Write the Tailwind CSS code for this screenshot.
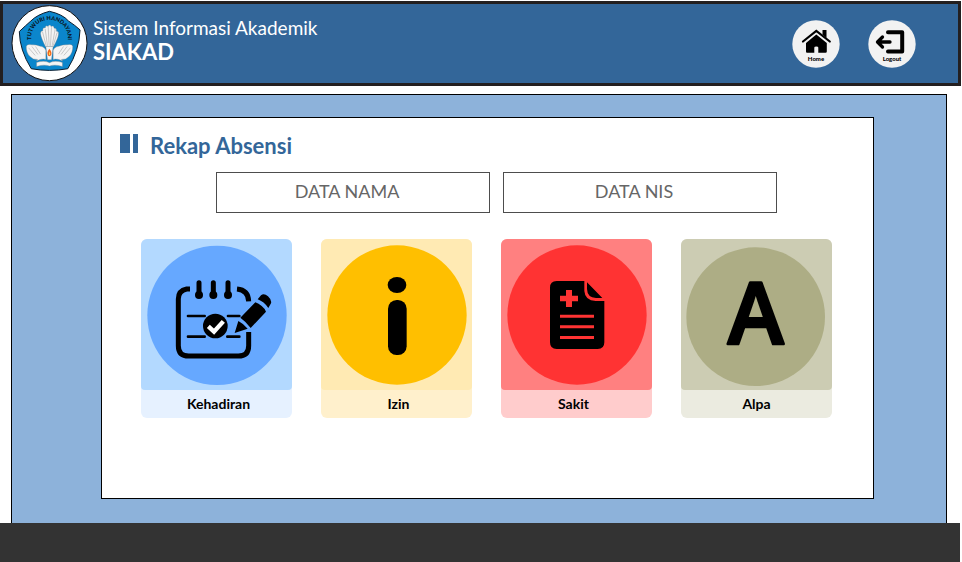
<!DOCTYPE html>
<html lang="id">
<head>
<meta charset="utf-8">
<meta name="viewport" content="width=device-width, initial-scale=1">
<title>SIAKAD - Rekap Absensi</title>
<script src="https://cdn.jsdelivr.net/npm/@tailwindcss/browser@4"></script>
</head>
<body class="flex min-h-screen flex-col bg-white font-['Lato','Open_Sans',sans-serif] text-black">

<header class="mt-px mr-px flex items-center border-[3px] border-[#231f20] bg-[#336699] pt-px pr-[42px] pb-px pl-2">
  <svg class="size-[77px] shrink-0" viewBox="32 14 232 232" role="img" aria-label="Logo Tut Wuri Handayani">
    <circle cx="148" cy="129" r="113" fill="#fff" stroke="#111" stroke-width="3"/>
    <path d="M148 33Q188 42 205 62Q226 76 240 89Q238 150 203 206Q148 216 93 206Q58 150 57 94Q76 76 92 62Q112 42 148 33Z" fill="#0b86cc" stroke="#0a1a2a" stroke-width="3"/>
    <path id="arc" d="M93 122C86 38 210 38 203 122" fill="none"/>
    <text font-family="Lato" font-size="17" font-weight="900" fill="#071522"><textPath href="#arc" startOffset="50%" text-anchor="middle">TUTWURI HANDAYANI</textPath></text>
    <g fill="#f4f4f4" stroke="#777" stroke-width="1">
      <path d="M136 140Q122 112 121 100Q121 91 128 92Q127 80 135 83Q137 72 144 79Q148 70 153 79Q161 74 162 84Q170 82 169 93Q177 93 175 103Q174 114 160 140Z"/>
      <path d="M137 150Q132 139 120 138Q105 133 95 134Q81 130 78 138Q77 158 90 170Q98 179 112 178L108 183Q126 174 137 178Z"/>
      <path d="M159 150Q164 139 176 138Q191 133 201 134Q216 130 218 138Q219 158 206 170Q198 179 184 178L188 183Q170 174 159 178Z"/>
      <path d="M137 139H159L154 179H142Z"/>
      <path d="M109 187Q132 180 148 188Q164 180 187 187V199Q163 192 148 198Q133 192 109 199Z"/>
    </g>
    <path d="M135 86L142 137M144 80L147 137M154 81L151 137M165 87L156 137M127 95L138 137M171 97L159 137M85 143L105 166M95 139L113 163M106 139L121 162M211 143L191 166M201 139L183 163M190 139L175 162" stroke="#999" stroke-width="1.5"/>
    <path d="M148 146Q156 156 153 165Q150 170 144 167Q138 157 148 146Z" fill="#f2661b"/>
    <path d="M148 154Q152 160 149 165Q144 165 148 154Z" fill="#ffd64a"/>
  </svg>
  <div class="ml-[5px] flex flex-1 flex-col pb-2 text-white">
    <p class="text-[19px] leading-6">Sistem Informasi Akademik</p>
    <h1 class="text-[22px] leading-6 font-bold">SIAKAD</h1>
  </div>
  <nav class="flex gap-7" aria-label="Utama">
    <a href="#home" aria-label="Home" class="block">
      <svg class="size-12" viewBox="0 0 48 48" aria-hidden="true">
        <circle cx="24" cy="24" r="23.700" fill="#f2f2f2"/>
        <path d="M30.500 10H34.500V18L30.500 14.500Z"/>
        <path d="M11 21.500L24.300 11L37.800 21.500" fill="none" stroke="#000" stroke-width="2.200" stroke-linecap="round"/>
        <path d="M24.300 14.500L34.800 23V31.500Q34.800 32.700 33.600 32.700H26.300V27.500Q26.300 26.500 24.300 26.500T22.300 27.500V32.700H15Q14 32.700 14 31.500V23Z"/>
        <text x="24" y="41" text-anchor="middle" font-family="Lato" font-weight="900" font-size="6">Home</text>
      </svg>
    </a>
    <a href="#logout" aria-label="Logout" class="block">
      <svg class="size-12" viewBox="0 0 48 48" aria-hidden="true">
        <circle cx="24" cy="24" r="23.700" fill="#f2f2f2"/>
        <path d="M20 12.300H34.200V31.600H20" fill="none" stroke="#000" stroke-width="4" stroke-linecap="round" stroke-linejoin="round"/>
        <path d="M10 22H22M14.500 17L9.500 22L14.500 27" fill="none" stroke="#000" stroke-width="3.300" stroke-linecap="round" stroke-linejoin="round"/>
        <text x="24" y="41" text-anchor="middle" font-family="Lato" font-weight="900" font-size="6">Logout</text>
      </svg>
    </a>
  </nav>
</header>

<main class="mt-2 mr-[15px] ml-[11px] flex flex-1 flex-col border border-b-0 border-black bg-[#8db2da] pt-[22px] pr-[72px] pb-6 pl-[89px]">
  <section class="flex-1 border border-black bg-white px-[18px] pt-4" aria-labelledby="judul">
    <div class="flex items-start gap-3">
      <span class="flex gap-[3px]" aria-hidden="true"><span class="h-[19px] w-2.5 bg-[#336699]"></span><span class="h-[19px] w-[5px] bg-[#336699]"></span></span>
      <h2 id="judul" class="text-[22px] leading-6 font-bold text-[#336699]">Rekap Absensi</h2>
    </div>

    <form class="mt-[14px] ml-[18px] flex justify-center gap-[13px]">
      <input type="text" aria-label="Data nama" placeholder="DATA NAMA" class="h-[41px] w-[274px] border border-[#4d4d4d] bg-white pr-3 pb-1 text-center text-lg text-[#666] placeholder:text-[#666]">
      <input type="text" aria-label="Data NIS" placeholder="DATA NIS" class="h-[41px] w-[274px] border border-[#4d4d4d] bg-white pr-3 pb-1 text-center text-lg text-[#666] placeholder:text-[#666]">
    </form>

    <div class="mt-[26px] flex justify-center gap-[29px] pr-0.5">
      <a href="#kehadiran" class="w-[151px] overflow-hidden rounded-md bg-[#e6f1ff]">
        <svg class="block w-full rounded bg-[#b3d9ff]" viewBox="21 27 453 453" aria-hidden="true">
          <circle cx="249" cy="256" r="209" fill="#66a8ff"/>
          <path d="M168 177H158Q133 182 133 207V347Q133 378 164 378H313Q344 378 344 347V306M309 177Q343 180 344 214" fill="none" stroke="#000" stroke-width="15"/>
          <path d="M195 158V196M238 158V196M282 158V196" stroke="#000" stroke-width="15" stroke-linecap="round"/>
          <circle cx="195" cy="195" r="12"/><circle cx="238" cy="195" r="12"/><circle cx="282" cy="195" r="12"/>
          <path d="M162 258H212M282 258H316M162 320H212M280 320H316" stroke="#000" stroke-width="8" stroke-linecap="round"/>
          <circle cx="244" cy="288" r="37"/>
          <path d="M223 289L240 305L268 274" fill="none" stroke="#fff" stroke-width="13"/>
          <path d="M319 263L364 217Q374 221 383 228T396 245L350 294Q335 274 319 263ZM313 273Q330 282 341 296L302 309ZM371 208L381 196Q390 189 402 199Q414 210 411 220L403 234Q390 215 371 208Z"/>
        </svg>
        <span class="block pl-1 text-center text-sm leading-7 font-bold">Kehadiran</span>
      </a>
      <a href="#izin" class="w-[151px] overflow-hidden rounded-md bg-[#fff0cc]">
        <svg class="block w-full rounded bg-[#ffeab3]" viewBox="21 27 453 453" aria-hidden="true">
          <circle cx="249" cy="255" r="209" fill="#ffbf00"/>
          <ellipse cx="249" cy="165" rx="28" ry="24"/>
          <rect x="222" y="210" width="56" height="165" rx="26"/>
        </svg>
        <span class="block pl-1 text-center text-sm leading-7 font-bold">Izin</span>
      </a>
      <a href="#sakit" class="w-[151px] overflow-hidden rounded-md bg-[#ffcccc]">
        <svg class="block w-full rounded bg-[#ff8080]" viewBox="18 24 453 453" aria-hidden="true">
          <circle cx="246" cy="252" r="209" fill="#ff3333"/>
          <path d="M185 150H268V180Q270 209 302 210H328V334Q328 354 308 354H185Q165 354 165 334V170Q165 150 185 150ZM276 154L322 201H303Q277 200 276 174Z"/>
          <path d="M213 177H231V194H249V211H231V228H213V211H195V194H213ZM195 251H297V260H195ZM195 283H297V292H195ZM195 315H297V324H195Z" fill="#ff3333"/>
        </svg>
        <span class="block pr-1.5 text-center text-sm leading-7 font-bold">Sakit</span>
      </a>
      <a href="#alpa" class="w-[151px] overflow-hidden rounded-md bg-[#ebebe0]">
        <svg class="block w-full rounded bg-[#ccccb3]" viewBox="18 27 453 453" aria-hidden="true">
          <circle cx="242" cy="260" r="208" fill="#adad85"/>
          <text x="242" y="341" text-anchor="middle" font-family="Open Sans" font-weight="600" font-size="254" stroke="#000" stroke-width="8" stroke-linejoin="round">A</text>
        </svg>
        <span class="block text-center text-sm leading-7 font-bold">Alpa</span>
      </a>
    </div>
  </section>
</main>

<footer class="mr-0.5 h-[39px] bg-[#333333]"></footer>
</body>
</html>
